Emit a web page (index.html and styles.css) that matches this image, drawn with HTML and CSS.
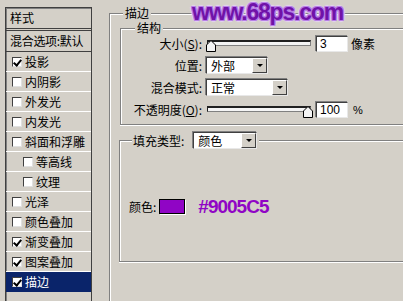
FILE: index.html
```html
<!DOCTYPE html>
<html lang="zh">

<head>
    <meta charset="UTF-8">
    <title>图层样式 - 描边</title>
    <link rel="stylesheet" href="styles.css">
</head>

<body>

    <!-- Lista de estilos -->
    <div class="styles">
        <div class="styles-head">样式</div>
        <div class="styles-blend">混合选项:默认</div>
        <div class="item"><span class="check on"></span>投影</div>
        <div class="item"><span class="check"></span>内阴影</div>
        <div class="item"><span class="check"></span>外发光</div>
        <div class="item"><span class="check"></span>内发光</div>
        <div class="item"><span class="check"></span>斜面和浮雕</div>
        <div class="item sub"><span class="check"></span>等高线</div>
        <div class="item sub"><span class="check"></span>纹理</div>
        <div class="item"><span class="check"></span>光泽</div>
        <div class="item"><span class="check"></span>颜色叠加</div>
        <div class="item"><span class="check on"></span>渐变叠加</div>
        <div class="item"><span class="check on"></span>图案叠加</div>
        <div class="item active"><span class="check on"></span>描边</div>
    </div>

    <!-- Panel de描边 -->
    <div class="main">
        <div class="group outer">
            <span class="legend">描边</span>

            <div class="group struct">
                <span class="legend">结构</span>
                <div class="form">
                    <label>大小(<u>S</u>):</label>
                    <div class="ctl">
                        <div class="slider">
                            <div class="track"></div>
                            <svg class="thumb" style="left: 0px" width="10" height="12" viewBox="0 0 10 12">
                                <polygon points="0.5,11.5 0.5,5 5,0.5 9.5,5 9.5,11.5" fill="#f4f4f4" stroke="#000" />
                            </svg>
                        </div>
                        <div class="field">3</div>
                        <span class="unit">像素</span>
                    </div>

                    <label>位置:</label>
                    <div class="ctl">
                        <div class="select pos">外部<span class="arrow"></span></div>
                    </div>

                    <label>混合模式:</label>
                    <div class="ctl">
                        <div class="select mode">正常<span class="arrow"></span></div>
                    </div>

                    <label>不透明度(<u>O</u>):</label>
                    <div class="ctl">
                        <div class="slider">
                            <div class="track"></div>
                            <svg class="thumb" style="left: 97px" width="10" height="12" viewBox="0 0 10 12">
                                <polygon points="0.5,11.5 0.5,5 5,0.5 9.5,5 9.5,11.5" fill="#f4f4f4" stroke="#000" />
                            </svg>
                        </div>
                        <div class="field">100</div>
                        <span class="unit pct">%</span>
                    </div>
                </div>
            </div>

            <div class="group fill">
                <div class="legend fill-legend">
                    <span>填充类型:</span>
                    <div class="select kind">颜色<span class="arrow"></span></div>
                </div>
                <div class="color-row">
                    <span>颜色:</span>
                    <span class="swatch"></span>
                    <span class="hex">#9005C5</span>
                </div>
            </div>
        </div>
    </div>

    <!-- Marca de agua -->
    <div class="watermark">www.68ps.com</div>

</body>

</html>
```

FILE: styles.css
```css
/* Reset */
* {
    margin: 0;
    padding: 0;
    box-sizing: border-box;
}

body {
    font-family: "Noto Sans CJK SC", "Liberation Sans", sans-serif;
    font-size: 12px;
    color: #000;
    background-color: #d4d0c8;
    width: 403px;
    height: 301px;
    overflow: hidden;
    display: flex;
    position: relative;
}

/* Lista de estilos */
.styles {
    margin: 7px 0 0 5px;
    width: 87px;
    height: 294px;
    flex: none;
    border: 1px solid #404040;
    border-bottom: none;
    box-shadow: inset 1px 1px 0 #808080;
}

.styles-head,
.styles-blend {
    height: 20px;
    line-height: 20px;
    padding-left: 4px;
}

.styles-head {
    height: 23px;
    border-bottom: 3px double #404040;
}

.styles-blend {
    height: 21px;
    border-bottom: 1px solid #404040;
    white-space: nowrap;
    letter-spacing: -0.3px;
}

.item {
    height: 20px;
    border-bottom: 1px solid #fff;
    display: flex;
    align-items: center;
    padding-left: 6px;
    gap: 3px;
}

.item.sub {
    padding-left: 17px;
}

.item.active {
    background-color: #0a246a;
    color: #fff;
    border-bottom-color: #0a246a;
}

.check {
    width: 10px;
    height: 10px;
    flex: none;
    background: #fff;
    border: 1px solid;
    border-color: #404040 #e0e0e0 #e0e0e0 #404040;
    position: relative;
}

.check.on::after {
    content: '';
    position: absolute;
    left: 2px;
    top: 0px;
    width: 3px;
    height: 6px;
    border: solid #000;
    border-width: 0 2px 2px 0;
    transform: rotate(40deg);
}

/* Panel principal */
.main {
    flex: none;
    width: 294px;
    margin-left: 17px;
    padding-top: 13px;
}

.group {
    position: relative;
    border: 1px solid #808080;
    border-right: none;
    box-shadow: inset 1px 1px 0 #fff, 0 1px 0 #fff;
}

.outer {
    height: 288px;
    border-bottom: none;
}

.legend {
    position: absolute;
    top: -8px;
    left: 13px;
    padding: 0 2px;
    line-height: 14px;
    background-color: #d4d0c8;
}

.struct {
    margin: 14px 0 0 10px;
    height: 97px;
    padding-top: 6px;
}

.struct .legend {
    left: 14px;
}

.form {
    display: grid;
    grid-template-columns: 81px auto;
    column-gap: 4px;
    row-gap: 5px;
    align-items: center;
}

.form label {
    text-align: right;
    height: 17px;
    line-height: 17px;
    white-space: nowrap;
}

.form u {
    text-underline-offset: 1px;
}

.ctl {
    display: flex;
    align-items: center;
    height: 17px;
}

/* Deslizadores */
.slider {
    position: relative;
    width: 108px;
    height: 17px;
}

.track {
    position: absolute;
    left: 1px;
    right: 3px;
    top: 5px;
    height: 6px;
    background: #f4f4f4;
    border: 1px solid #202020;
    border-top-width: 2px;
    border-right-color: #808080;
    border-bottom-color: #808080;
}

.thumb {
    position: absolute;
    top: 5px;
}

.field {
    width: 32px;
    height: 16px;
    margin-left: 2px;
    padding-left: 3px;
    background: #fff;
    border: 1px solid;
    border-color: #404040 #e8e8e8 #e8e8e8 #404040;
    box-shadow: -1px -1px 0 #808080;
    font-family: "Liberation Sans", Arial, sans-serif;
    font-size: 12px;
    line-height: 14px;
}

.unit {
    margin-left: 3px;
}

.unit.pct {
    margin-left: 5px;
    font-family: "Liberation Sans", Arial, sans-serif;
    font-size: 11px;
}

/* Listas desplegables */
.select {
    position: relative;
    height: 17px;
    padding-left: 4px;
    line-height: 15px;
    background: #fff;
    border: 1px solid;
    border-color: #404040 #e8e8e8 #e8e8e8 #404040;
    box-shadow: -1px -1px 0 #808080;
}

.select.pos {
    width: 62px;
}

.select.mode {
    width: 82px;
}

.select.kind {
    width: 64px;
}

.arrow {
    position: absolute;
    right: 0;
    top: 0;
    width: 15px;
    height: 15px;
    background: #d4d0c8;
    border: 1px solid;
    border-color: #fff #404040 #404040 #fff;
}

.arrow::after {
    content: '';
    position: absolute;
    left: 4px;
    top: 5px;
    border: 3px solid transparent;
    border-top: 3px solid #000;
    border-bottom: 0;
    width: 0;
}

/* Tipo de relleno */
.fill {
    margin: 15px 0 0 9px;
    height: 122px;
    padding: 57px 0 0 9px;
}

.fill-legend {
    display: flex;
    align-items: center;
    gap: 9px;
    top: -9px;
    left: 12px;
    padding: 0 2px 0 1px;
}

.color-row {
    display: flex;
    align-items: center;
    height: 17px;
}

.swatch {
    width: 26px;
    height: 15px;
    margin-left: 3px;
    background-color: #9005c5;
    border: 1px solid #000;
    box-shadow: 1px 1px 0 #fff;
}

.hex {
    margin-left: 13px;
    font-family: "Liberation Sans", Arial, sans-serif;
    font-weight: bold;
    font-size: 19px;
    letter-spacing: -1px;
    color: #9005c5;
}

/* Marca de agua */
.watermark {
    position: absolute;
    left: 192px;
    top: 1px;
    font-family: "Liberation Sans", Arial, sans-serif;
    font-weight: bold;
    font-size: 23px;
    line-height: 23px;
    letter-spacing: -1.2px;
    color: #7012a8;
    text-shadow: 1px 0 0 #b77ee6, -1px 0 0 #b77ee6, 0 1px 0 #b77ee6, 0 -1px 0 #b77ee6,
        1px 1px 0 #b77ee6, -1px -1px 0 #b77ee6, 1px -1px 0 #b77ee6, -1px 1px 0 #b77ee6,
        2px 0 1px #e4d2f2, -2px 0 1px #e4d2f2, 0 2px 1px #e4d2f2, 0 -2px 1px #e4d2f2;
}
```
